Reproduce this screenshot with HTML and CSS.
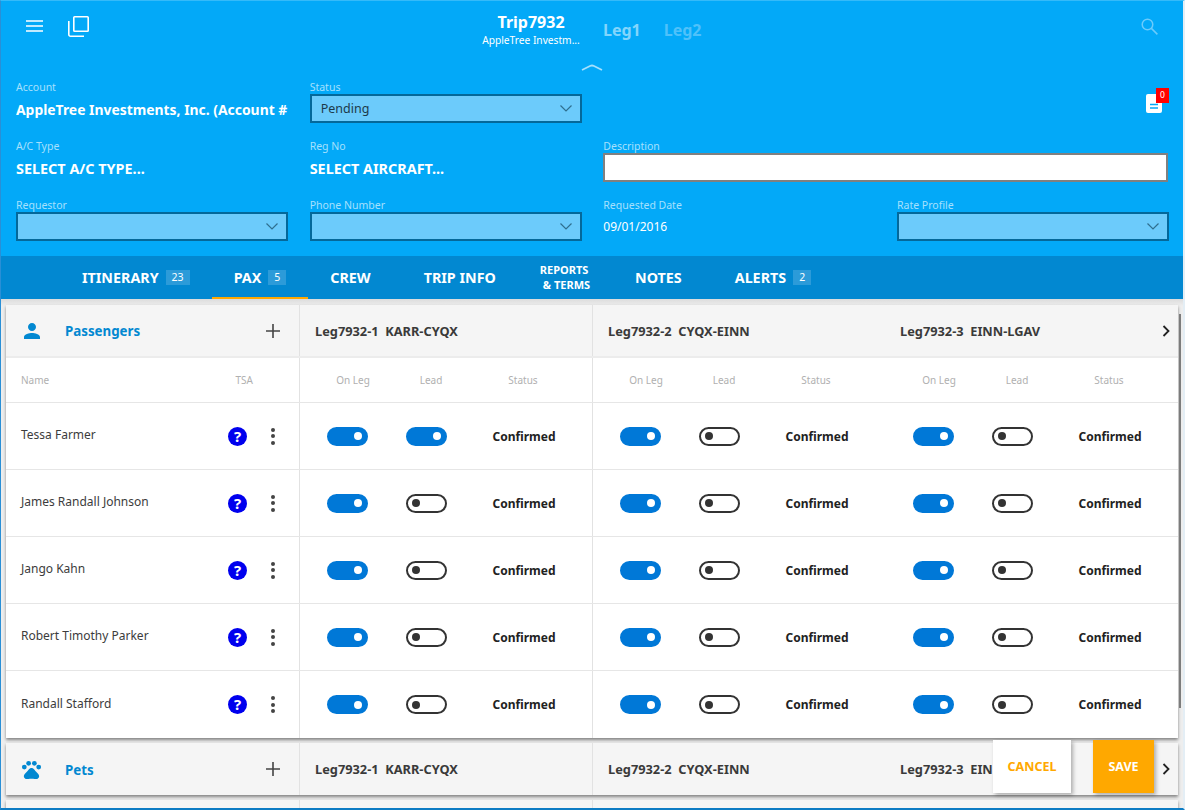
FILE: index.html
```html
<!DOCTYPE html>
<html lang="en">
<head>
<meta charset="utf-8">
<title>Trip7932</title>
<link rel="stylesheet" href="styles.css">
</head>
<body>
<div class="app">
  <header class="hero">
    <div class="topbar">
      <svg class="ic-menu" width="17" height="12" viewBox="0 0 17 12"><path d="M0 1h17M0 6h17M0 11h17" stroke="#fff" stroke-width="1.6" fill="none"/></svg>
      <svg class="ic-copy" width="21" height="21" viewBox="0 0 21 21" fill="none" stroke="#fff" stroke-width="1.6"><rect x="5.8" y="0.8" width="14.4" height="14.4" rx="0.8"/><path d="M0.8 5v13.5a1.7 1.7 0 0 0 1.7 1.7H16"/></svg>
      <div class="trip">
        <div class="trip-title">Trip7932</div>
        <div class="trip-sub">AppleTree Investm...</div>
      </div>
      <div class="leg-link leg-one">Leg1</div>
      <div class="leg-link leg-two">Leg2</div>
      <svg class="ic-search" width="17" height="17" viewBox="0 0 17 17" fill="none" stroke="#6ccbfb" stroke-width="1.5"><circle cx="6.500" cy="6.500" r="5.300"/><path d="M10.400 10.400l6 6"/></svg>
    </div>
    <div class="collapse"><svg width="22" height="7" viewBox="0 0 22 7" fill="none" stroke="#a5e0fd" stroke-width="1.8"><path d="M1 6l8-4q2-1 4 0l8 4"/></svg></div>
    <div class="form">
      <div class="field"><div class="lbl">Account</div><div class="val account">AppleTree Investments, Inc. (Account #1</div></div>
      <div class="field"><div class="lbl">Status</div><div class="sel"><span>Pending</span><svg class="sel-arrow" width="12" height="7" viewBox="0 0 12 7" fill="none" stroke="#2f6f8f" stroke-width="1.2"><path d="M.5.5L6 6l5.500-5.500"/></svg></div></div>
      <div class="field"></div>
      <div class="field notes-cell"><div class="notes-ic"><svg width="16" height="19" viewBox="0 0 16 19"><path d="M2 0h12a2 2 0 0 1 2 2v15a2 2 0 0 1-2 2H2a2 2 0 0 1-2-2V2a2 2 0 0 1 2-2z" fill="#fff"/><path d="M4 10.500h8M4 14h8" stroke="#03a9f8" stroke-width="1.400"/></svg><span class="notes-badge">0</span></div></div>

      <div class="field"><div class="lbl">A/C Type</div><div class="val">SELECT A/C TYPE...</div></div>
      <div class="field"><div class="lbl">Reg No</div><div class="val">SELECT AIRCRAFT...</div></div>
      <div class="field span2"><div class="lbl">Description</div><div class="txt"></div></div>

      <div class="field"><div class="lbl">Requestor</div><div class="sel"><svg class="sel-arrow" width="12" height="7" viewBox="0 0 12 7" fill="none" stroke="#2f6f8f" stroke-width="1.2"><path d="M.5.5L6 6l5.500-5.500"/></svg></div></div>
      <div class="field"><div class="lbl">Phone Number</div><div class="sel"><svg class="sel-arrow" width="12" height="7" viewBox="0 0 12 7" fill="none" stroke="#2f6f8f" stroke-width="1.2"><path d="M.5.5L6 6l5.500-5.500"/></svg></div></div>
      <div class="field"><div class="lbl">Requested Date</div><div class="date">09/01/2016</div></div>
      <div class="field"><div class="lbl">Rate Profile</div><div class="sel"><svg class="sel-arrow" width="12" height="7" viewBox="0 0 12 7" fill="none" stroke="#2f6f8f" stroke-width="1.2"><path d="M.5.5L6 6l5.500-5.500"/></svg></div></div>
    </div>
  </header>

  <nav class="tabs">
    <div class="tab">ITINERARY<span class="count">23</span></div>
    <div class="tab active">PAX<span class="count">5</span></div>
    <div class="tab wide-a">CREW</div>
    <div class="tab">TRIP INFO</div>
    <div class="tab two-line">REPORTS<span class="line-two">&amp; TERMS</span></div>
    <div class="tab wide-b">NOTES</div>
    <div class="tab">ALERTS<span class="count">2</span></div>
  </nav>

  <main class="content">
    <section class="card">
      <div class="row head ruled">
        <div class="cell title-cell">
          <svg class="title-ic" width="24" height="24" viewBox="0 0 24 24" fill="#0288d1"><path d="M12 12c2.210 0 4-1.790 4-4s-1.790-4-4-4-4 1.790-4 4 1.790 4 4 4zm0 2c-2.670 0-8 1.340-8 4v2h16v-2c0-2.660-5.330-4-8-4z"/></svg>
          <span class="title">Passengers</span>
          <svg class="plus" width="14" height="14" viewBox="0 0 14 14" stroke="#444" stroke-width="1.600"><path d="M7 0v14M0 7h14"/></svg>
        </div>
        <div class="cell leg-head">Leg7932-1&nbsp; KARR-CYQX</div>
        <div class="cell leg-head open">Leg7932-2&nbsp; CYQX-EINN</div>
        <div class="cell leg-head last">Leg7932-3&nbsp; EINN-LGAV<svg class="next" width="8" height="12" viewBox="0 0 8 12" fill="none" stroke="#222" stroke-width="1.800"><path d="M1.500 1l5 5-5 5"/></svg></div>
      </div>

      <div class="row columns">
        <div class="cell name-head"><span>Name</span><span class="tsa">TSA</span></div>
        <div class="cell col-labels"><span>On Leg</span><span>Lead</span><span>Status</span></div>
        <div class="cell col-labels open"><span>On Leg</span><span>Lead</span><span>Status</span></div>
        <div class="cell col-labels last"><span>On Leg</span><span>Lead</span><span>Status</span></div>
      </div>

      <div class="row pax">
        <div class="cell person"><span class="name">Tessa Farmer</span><span class="help">?</span><span class="more"><i></i><i></i><i></i></span></div>
        <div class="cell toggles"><span class="tg on"></span><span class="tg on"></span><b>Confirmed</b></div>
        <div class="cell toggles open"><span class="tg on"></span><span class="tg"></span><b>Confirmed</b></div>
        <div class="cell toggles last"><span class="tg on"></span><span class="tg"></span><b>Confirmed</b></div>
      </div>
      <div class="row pax">
        <div class="cell person"><span class="name">James Randall Johnson</span><span class="help">?</span><span class="more"><i></i><i></i><i></i></span></div>
        <div class="cell toggles"><span class="tg on"></span><span class="tg"></span><b>Confirmed</b></div>
        <div class="cell toggles open"><span class="tg on"></span><span class="tg"></span><b>Confirmed</b></div>
        <div class="cell toggles last"><span class="tg on"></span><span class="tg"></span><b>Confirmed</b></div>
      </div>
      <div class="row pax">
        <div class="cell person"><span class="name">Jango Kahn</span><span class="help">?</span><span class="more"><i></i><i></i><i></i></span></div>
        <div class="cell toggles"><span class="tg on"></span><span class="tg"></span><b>Confirmed</b></div>
        <div class="cell toggles open"><span class="tg on"></span><span class="tg"></span><b>Confirmed</b></div>
        <div class="cell toggles last"><span class="tg on"></span><span class="tg"></span><b>Confirmed</b></div>
      </div>
      <div class="row pax">
        <div class="cell person"><span class="name">Robert Timothy Parker</span><span class="help">?</span><span class="more"><i></i><i></i><i></i></span></div>
        <div class="cell toggles"><span class="tg on"></span><span class="tg"></span><b>Confirmed</b></div>
        <div class="cell toggles open"><span class="tg on"></span><span class="tg"></span><b>Confirmed</b></div>
        <div class="cell toggles last"><span class="tg on"></span><span class="tg"></span><b>Confirmed</b></div>
      </div>
      <div class="row pax end">
        <div class="cell person"><span class="name">Randall Stafford</span><span class="help">?</span><span class="more"><i></i><i></i><i></i></span></div>
        <div class="cell toggles"><span class="tg on"></span><span class="tg"></span><b>Confirmed</b></div>
        <div class="cell toggles open"><span class="tg on"></span><span class="tg"></span><b>Confirmed</b></div>
        <div class="cell toggles last"><span class="tg on"></span><span class="tg"></span><b>Confirmed</b></div>
      </div>
    </section>

    <section class="card">
      <div class="row head slim">
        <div class="cell title-cell">
          <svg class="title-ic paw" width="23" height="23" viewBox="0 0 24 24" fill="#0288d1"><circle cx="4.500" cy="9.500" r="2.500"/><circle cx="9" cy="5.500" r="2.500"/><circle cx="15" cy="5.500" r="2.500"/><circle cx="19.500" cy="9.500" r="2.500"/><path d="M17.340 14.860c-.87-1.020-1.600-1.890-2.480-2.910-.46-.54-1.050-1.080-1.750-1.320-.11-.04-.22-.07-.33-.09-.25-.04-.52-.04-.78-.04s-.53 0-.79.05c-.11.02-.22.05-.33.09-.7.24-1.280.78-1.750 1.320-.87 1.020-1.600 1.890-2.480 2.910-1.310 1.310-2.920 2.760-2.620 4.790.29 1.020 1.020 2.030 2.330 2.320.73.15 3.060-.44 5.540-.44h.18c2.480 0 4.810.58 5.540.44 1.310-.29 2.040-1.310 2.330-2.320.31-2.040-1.300-3.490-2.610-4.800z"/></svg>
          <span class="title">Pets</span>
          <svg class="plus" width="14" height="14" viewBox="0 0 14 14" stroke="#444" stroke-width="1.600"><path d="M7 0v14M0 7h14"/></svg>
        </div>
        <div class="cell leg-head">Leg7932-1&nbsp; KARR-CYQX</div>
        <div class="cell leg-head open">Leg7932-2&nbsp; CYQX-EINN</div>
        <div class="cell leg-head last">Leg7932-3&nbsp; EINN-LGAV<svg class="next" width="8" height="12" viewBox="0 0 8 12" fill="none" stroke="#222" stroke-width="1.800"><path d="M1.500 1l5 5-5 5"/></svg></div>
      </div>
    </section>

    <section class="card">
      <div class="row head slim">
        <div class="cell"></div>
        <div class="cell"></div>
        <div class="cell open"></div>
        <div class="cell last"></div>
      </div>
    </section>
  </main>

  <div class="scrollbar"></div>
  <div class="actions">
    <div class="btn cancel">CANCEL</div>
    <div class="btn save">SAVE</div>
  </div>
</div>
</body>
</html>
```

FILE: styles.css
```css
* { box-sizing: border-box; }

html, body {
  margin: 0;
  height: 810px;
  overflow: hidden;
  background: #f0f0f0;
}

body {
  font-family: "Noto Sans", "Open Sans", sans-serif;
  color: #333;
}

.app {
  position: relative;
  width: 1185px;
  height: 810px;
  display: flex;
  flex-direction: column;
  overflow: hidden;
  border-top: 1px solid #35baf9;
  border-left: 1px solid #2a8fd6;
  border-right: 2px solid #e4eef5;
  border-bottom: 2px solid #0d7cc4;
}

/* Blue header */
.hero {
  flex: none;
  height: 255px;
  background: #03a9f8;
  overflow: hidden;
}

.topbar {
  height: 58px;
  display: flex;
  align-items: flex-start;
  position: relative;
}

.ic-menu { margin: 19px 0 0 25px; }
.ic-copy { margin: 15px 0 0 25px; }

.trip {
  width: 110px;
  margin-left: 387px;
  text-align: center;
  color: #fff;
}

.trip-title {
  margin-top: 9px;
  font-size: 16px;
  line-height: 24px;
  font-weight: 700;
}

.trip-sub {
  font-size: 10.2px;
  line-height: 13px;
  white-space: nowrap;
}

.leg-link {
  margin-top: 18px;
  font-size: 16px;
  line-height: 22px;
  font-weight: 700;
}

.leg-one { margin-left: 17px; color: #83d5fc; }
.leg-two { margin-left: 23px; color: #4fc1fa; }

.ic-search { margin: 17px 0 0 439px; }

.collapse {
  height: 21px;
  display: flex;
  justify-content: center;
  padding-top: 5px;
}

.form {
  display: grid;
  grid-template-columns: repeat(4, 272px);
  grid-template-rows: 59px 59px 58px;
  column-gap: 21.67px;
  padding-left: 15px;
}

.field { min-width: 0; }
.span2 { grid-column: span 2; }

.lbl {
  height: 14px;
  font-size: 10.5px;
  line-height: 14px;
  color: #a6e0fd;
  white-space: nowrap;
}

.val {
  height: 29px;
  padding-top: 1px;
  font-size: 14.4px;
  line-height: 29px;
  font-weight: 700;
  color: #fff;
  white-space: nowrap;
  overflow: hidden;
}

.val.account { font-size: 13.9px; }

.sel {
  position: relative;
  height: 29px;
  padding-left: 9px;
  background: #6ccbfb;
  border: 2px solid #04689a;
  font-size: 12.5px;
  line-height: 25px;
  color: #1c3a4a;
}

.sel-arrow {
  position: absolute;
  right: 8px;
  top: 9px;
}

.txt {
  width: 565px;
  height: 29px;
  background: #fff;
  border: 2px solid #808080;
}

.date {
  height: 29px;
  font-size: 12px;
  line-height: 29px;
  color: #fff;
}

.notes-cell {
  display: flex;
  justify-content: flex-end;
}

.notes-ic {
  position: relative;
  width: 16px;
  height: 19px;
  margin: 14px 7px 0 0;
}

.notes-ic svg { display: block; }

.notes-badge {
  position: absolute;
  left: 10px;
  top: -6px;
  width: 13px;
  height: 15px;
  background: #f00;
  color: #fff;
  font-size: 8.5px;
  line-height: 14px;
  text-align: center;
}

/* Tabs */
.tabs {
  flex: none;
  height: 43px;
  display: flex;
  padding-left: 59px;
  background: #0288d1;
  color: #fff;
}

.tab {
  display: flex;
  align-items: center;
  padding: 0 22px;
  font-size: 14.3px;
  font-weight: 700;
  white-space: nowrap;
}

.tab.active { box-shadow: inset 0 -2px 0 #ffa800; }
.wide-a { margin-right: 9px; }
.wide-b { margin: 0 9px 0 1px; }

.two-line {
  display: block;
  padding-top: 6px;
  font-size: 11px;
  line-height: 15px;
}

.line-two {
  display: block;
  margin-left: 3px;
}

.count {
  margin-left: 7px;
  padding: 0 6px;
  min-width: 18px;
  height: 15px;
  background: #2c9bd9;
  font-size: 10.5px;
  font-weight: 400;
  line-height: 15px;
  text-align: center;
}

/* Content */
.content {
  flex: 1;
  min-height: 0;
  padding: 6px 0 0 5px;
  display: flex;
  flex-direction: column;
  gap: 5px;
  background: linear-gradient(#dcdcdc, #eeeeee 7px);
  overflow: hidden;
}

.card {
  flex: none;
  width: 1172px;
  background: #fff;
  box-shadow: 0 2px 3px rgba(0, 0, 0, 0.45);
}

.row {
  display: grid;
  grid-template-columns: 294px 293px 293px 292px;
}

.cell {
  min-width: 0;
  border-right: 1px solid #e2e2e2;
}

.cell.open,
.cell.last { border-right: 0; }

.head {
  height: 53px;
  background: #f5f5f5;
}

.head.ruled { border-bottom: 2px solid #ececec; }
.head.slim { height: 52px; }

.title-cell {
  display: flex;
  align-items: center;
}

.title-ic { margin-left: 14px; }

.title {
  margin: 1px 0 0 21px;
  font-size: 13.3px;
  font-weight: 700;
  color: #0288d1;
}

.paw + .title { margin-left: 22px; }

.plus { margin-left: auto; margin-right: 19px; }

.leg-head {
  display: flex;
  align-items: center;
  padding-left: 15px;
  font-size: 12.8px;
  font-weight: 700;
  color: #3a3a3a;
  white-space: nowrap;
}

.leg-head.last { padding-left: 14px; }

.next { margin-left: auto; margin-right: 8px; }

.columns {
  height: 45px;
  border-bottom: 1px solid #e6e6e6;
  font-size: 10px;
  color: #b0b0b0;
}

.name-head {
  display: flex;
  align-items: center;
  padding: 0 46px 0 15px;
  justify-content: space-between;
}

.col-labels {
  display: grid;
  grid-template-columns: 106px 50px 134px;
  align-items: center;
  text-align: center;
}

.pax {
  height: 67px;
  border-bottom: 1px solid #e6e6e6;
}

.pax.end { border-bottom: 0; }

.person {
  display: flex;
  align-items: center;
  padding-left: 15px;
}

.name {
  flex: 1;
  margin-top: -3px;
  font-size: 12px;
  color: #3c3c3c;
  white-space: nowrap;
}

.help {
  width: 19px;
  height: 19px;
  border-radius: 50%;
  background: #0000ee;
  color: #fff;
  font-size: 15px;
  font-weight: 700;
  line-height: 19px;
  text-align: center;
}

.more {
  display: flex;
  flex-direction: column;
  gap: 2.500px;
  margin: 0 24px 0 24px;
}

.more i {
  width: 4px;
  height: 4px;
  border-radius: 50%;
  background: #444;
}

.toggles {
  display: grid;
  grid-template-columns: 94px 64px 132px;
  justify-items: center;
  align-items: center;
  font-size: 12px;
  color: #222;
}

.tg {
  position: relative;
  width: 41px;
  height: 19px;
  border-radius: 10px;
  border: 2px solid #333;
  background: #fff;
}

.tg::after {
  content: "";
  position: absolute;
  left: 4px;
  top: 3.500px;
  width: 8px;
  height: 8px;
  border-radius: 50%;
  background: #333;
}

.tg.on {
  border-color: #0078d7;
  background: #0078d7;
}

.tg.on::after {
  left: auto;
  right: 4px;
  background: #fff;
}

/* Overlays */
.scrollbar {
  position: absolute;
  left: 1178px;
  top: 313px;
  width: 2px;
  height: 394px;
  background: #7c7c7c;
}

.actions {
  position: absolute;
  right: 29px;
  bottom: 15px;
  display: flex;
  gap: 22px;
}

.btn {
  height: 53px;
  font-size: 12.5px;
  font-weight: 700;
  line-height: 53px;
  text-align: center;
  box-shadow: 2px 2px 4px rgba(0, 0, 0, 0.3);
}

.cancel {
  width: 78px;
  background: #fff;
  color: #ffa800;
}

.save {
  width: 61px;
  background: #ffa800;
  color: #fff;
}
```
